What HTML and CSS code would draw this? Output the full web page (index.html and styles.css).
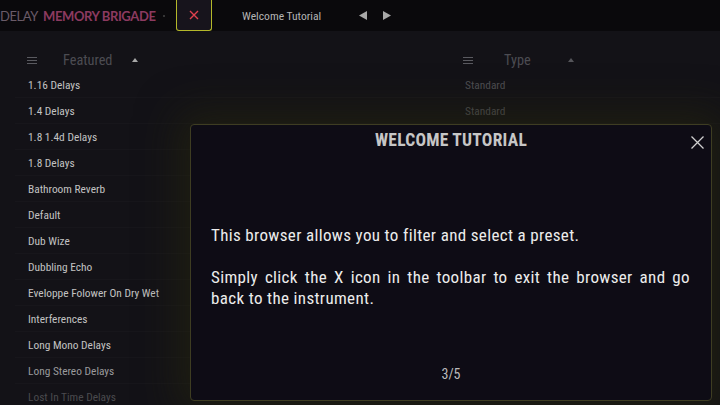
FILE: index.html
```html
<!DOCTYPE html>
<html>
<head>
<meta charset="utf-8">
<link rel="stylesheet" href="styles.css">
</head>
<body>
<div class="topbar">
  <div class="brand"><span class="b1">DELAY</span><span class="b2">MEMORY BRIGADE</span><span class="dot"></span></div>
  <div class="close-btn">
    <svg width="10" height="10" viewBox="0 0 10 10"><path d="M1 1L9 9M9 1L1 9" stroke="#e0404e" stroke-width="1.4" fill="none"/></svg>
  </div>
  <div class="tut-title">Welcome Tutorial</div>
  <div class="nav">
    <svg width="8" height="9" viewBox="0 0 8 9"><path d="M8 0L0 4.5L8 9Z" fill="#a8a8a8"/></svg>
    <svg width="8" height="9" viewBox="0 0 8 9"><path d="M0 0L8 4.5L0 9Z" fill="#a8a8a8"/></svg>
  </div>
</div>
<div class="browser">
  <div class="col col-name">
    <div class="head">
      <span class="burger"><i></i><i></i><i></i></span>
      <span class="head-label">Featured</span>
      <span class="sort"></span>
    </div>
    <div class="row">1.16 Delays</div>
    <div class="row">1.4 Delays</div>
    <div class="row">1.8 1.4d Delays</div>
    <div class="row">1.8 Delays</div>
    <div class="row">Bathroom Reverb</div>
    <div class="row">Default</div>
    <div class="row">Dub Wize</div>
    <div class="row">Dubbling Echo</div>
    <div class="row">Eveloppe Folower On Dry Wet</div>
    <div class="row">Interferences</div>
    <div class="row">Long Mono Delays</div>
    <div class="row fade1">Long Stereo Delays</div>
    <div class="row fade2">Lost In Time Delays</div>
  </div>
  <div class="col col-type">
    <div class="head">
      <span class="burger"><i></i><i></i><i></i></span>
      <span class="head-label">Type</span>
      <span class="sort"></span>
    </div>
    <div class="row dim">Standard</div>
    <div class="row dim">Standard</div>
  </div>
</div>
<div class="modal">
  <div class="modal-title">WELCOME TUTORIAL</div>
  <div class="modal-close">
    <svg width="13" height="13" viewBox="0 0 13 13"><path d="M0.5 0.5L12.5 12.5M12.5 0.5L0.5 12.5" stroke="#d0d0d0" stroke-width="1.3" fill="none"/></svg>
  </div>
  <div class="modal-body">
    <p>This browser allows you to filter and select a preset.</p>
    <p>Simply click the X icon in the toolbar to exit the browser and go back to the instrument.</p>
  </div>
  <div class="modal-foot">3/5</div>
</div>
</body>
</html>
```

FILE: styles.css
```css
html, body {
  margin: 0;
  padding: 0;
}
body {
  width: 720px;
  height: 405px;
  overflow: hidden;
  background: #131217;
  font-family: "Roboto", "Liberation Sans", sans-serif;
  font-stretch: 75%;
  position: relative;
}
.topbar {
  height: 31px;
  background: #0a090c;
  display: flex;
  align-items: center;
}
.brand {
  font-family: "Lato", "DejaVu Sans", sans-serif;
  font-stretch: 100%;
  font-size: 13px;
  display: flex;
  align-items: center;
  width: 176px;
  letter-spacing: -0.4px;
}
.b1 { color: #6a5b68; font-weight: 400; margin-right: 5px; }
.b2 { color: #8c3a60; font-weight: 700; }
.dot {
  width: 2px; height: 2px; border-radius: 1px;
  background: #444; margin-left: 7px;
}
.close-btn {
  width: 36px;
  height: 31px;
  box-sizing: border-box;
  border: 1.5px solid #b4b82a;
  border-top: none;
  border-radius: 0 0 3px 3px;
  background: #17141c;
  display: flex;
  align-items: center;
  justify-content: center;
}
.tut-title {
  margin-left: 30px;
  font-size: 11.6px;
  color: #b4b4b4;
  width: 117px;
}
.nav {
  display: flex;
  gap: 16px;
  align-items: center;
}
.browser {
  display: grid;
  grid-template-columns: 436px 1fr;
  padding: 17px 0 0 15px;
}
.head {
  height: 24px;
  display: flex;
  align-items: center;
  padding-left: 12px;
}
.burger {
  display: flex;
  flex-direction: column;
  gap: 2px;
  width: 10px;
}
.burger i {
  display: block;
  height: 1px;
  background: #5a5a60;
}
.head-label {
  font-size: 14.3px;
  color: #4c4c52;
  margin-left: 26px;
  width: 69px;
}
.col-type .head-label { width: 64px; margin-left: 31px; }
.sort {
  width: 0; height: 0;
  border-left: 3px solid transparent;
  border-right: 3px solid transparent;
  border-bottom: 4px solid #a8a8a8;
}
.col-type .sort { border-bottom-color: #55555a; }
.row {
  height: 26px;
  line-height: 26px;
  box-sizing: border-box;
  border-bottom: 1px solid #17161b;
  padding-left: 13px;
  font-size: 11.4px;
  color: #c2c2c2;
}
.row.dim { color: #4e4e53; padding-left: 14px; }
.row.fade1 { color: #9a9a9c; }
.row.fade2 { color: #4a4a4e; }
.modal {
  position: absolute;
  left: 190px;
  top: 124px;
  width: 522px;
  height: 277px;
  box-sizing: border-box;
  border: 1px solid #3e3d22;
  border-radius: 4px;
  background: #0e0c15;
  box-shadow: 0 0 40px 12px rgba(40, 40, 12, 0.55);
  display: flex;
  flex-direction: column;
}
.modal-title {
  text-align: center;
  font-weight: 700;
  font-size: 17.5px;
  letter-spacing: 0.25px;
  color: #c6c6c6;
  padding-top: 4px;
  height: 26px;
  line-height: 22px;
}
.modal-close {
  position: absolute;
  right: 7px;
  top: 9px;
}
.modal-body {
  flex: 1;
  padding: 70px 21px 0 20px;
  font-size: 17px;
  line-height: 21px;
  letter-spacing: 0.35px;
  color: #ececec;
  text-align: justify;
}
.modal-body p { margin: 0 0 21px 0; }
.modal-foot {
  text-align: center;
  font-size: 14px;
  color: #bdbdbd;
  height: 34px;
}
```
